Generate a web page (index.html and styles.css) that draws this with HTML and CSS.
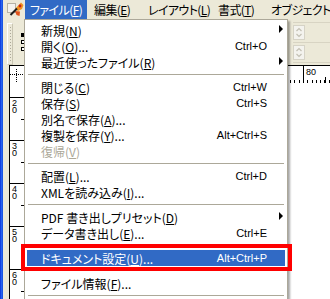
FILE: index.html
```html
<!DOCTYPE html>
<html lang="ja">
<head>
  <meta charset="UTF-8" />
  <title>ファイル メニュー</title>
  <link rel="stylesheet" href="styles.css">
</head>
<body>
  <div class="window">
    <div class="frame-edge"></div>

    <div class="workspace">
      <!-- ===== Menu bar ===== -->
      <div class="menubar">
        <span class="app-icon">
          <svg width="17" height="17" viewBox="0 0 17 17">
            <rect x="0.5" y="2.5" width="8" height="9" fill="#f4f3ee" stroke="#b5b2a5"/>
            <path d="M8 8 L14 1.5 L16.5 4 L15 8 L11 10 Z" fill="#f39321"/>
            <path d="M8 10 L13 10.5 L12.5 15 L9.5 14 Z" fill="#e0531b"/>
            <path d="M3.5 14 L10 7.5" stroke="#1e1e1e" stroke-width="2"/>
            <circle cx="13" cy="5" r="1.4" fill="#c4261a"/>
          </svg>
        </span>
        <span class="menubar-item file active">ファイル(<u>F</u>)</span>
        <span class="menubar-item edit">編集(<u>E</u>)</span>
        <span class="menubar-item layout">レイアウト(<u>L</u>)</span>
        <span class="menubar-item type">書式(<u>T</u>)</span>
        <span class="menubar-item object">オブジェクト(<u>O</u>)</span>
      </div>

      <!-- ===== Control panel ===== -->
      <div class="controlbar">
        <div class="grip"></div>
        <div class="refpoint">
          <i class="on"></i><i></i><i></i>
          <i></i><i></i><i></i>
          <i></i><i></i><i></i>
        </div>
        <div class="fields"></div>
        <div class="spin-col">
          <div class="spin-row">
            <span class="spinner">
              <svg width="10" height="13" viewBox="0 0 10 13"><path d="M2.5 5 L5 2.5 L7.5 5 M2.5 8 L5 10.5 L7.5 8" fill="none" stroke="#c3c0b3" stroke-width="1.2"/></svg>
            </span>
          </div>
          <div class="spin-row">
            <span class="spinner">
              <svg width="10" height="13" viewBox="0 0 10 13"><path d="M2.5 5 L5 2.5 L7.5 5 M2.5 8 L5 10.5 L7.5 8" fill="none" stroke="#c3c0b3" stroke-width="1.2"/></svg>
            </span>
          </div>
        </div>
      </div>

      <!-- ===== Document with rulers ===== -->
      <div class="doc">
        <div class="corner"></div>
        <div class="hruler">
          <span class="hseg">20</span><span class="hseg">30</span><span class="hseg">40</span>
          <span class="hseg">50</span><span class="hseg">60</span><span class="hseg">70</span>
          <span class="hseg">80</span>
        </div>
        <div class="vruler">
          <span class="vseg">20</span><span class="vseg">30</span><span class="vseg">40</span>
          <span class="vseg">50</span><span class="vseg">60</span>
        </div>
        <div class="canvas"></div>
      </div>
    </div>

    <!-- ===== File menu (open) ===== -->
    <ul class="menu">
      <li class="item"><span class="label">新規(<u>N</u>)</span><span class="arrow"></span></li>
      <li class="item"><span class="label">開く(<u>O</u>)...</span><span class="key">Ctrl+O</span></li>
      <li class="item"><span class="label">最近使ったファイル(<u>R</u>)</span><span class="arrow"></span></li>
      <li class="sep"></li>
      <li class="item"><span class="label">閉じる(<u>C</u>)</span><span class="key">Ctrl+W</span></li>
      <li class="item"><span class="label">保存(<u>S</u>)</span><span class="key">Ctrl+S</span></li>
      <li class="item"><span class="label">別名で保存(<u>A</u>)...</span></li>
      <li class="item"><span class="label">複製を保存(<u>Y</u>)...</span><span class="key">Alt+Ctrl+S</span></li>
      <li class="item disabled"><span class="label">復帰(<u>V</u>)</span></li>
      <li class="sep"></li>
      <li class="item"><span class="label">配置(<u>L</u>)...</span><span class="key">Ctrl+D</span></li>
      <li class="item"><span class="label">XMLを読み込み(<u>I</u>)...</span></li>
      <li class="sep"></li>
      <li class="item"><span class="label">PDF 書き出しプリセット(<u>D</u>)</span><span class="arrow"></span></li>
      <li class="item"><span class="label">データ書き出し(<u>E</u>)...</span><span class="key">Ctrl+E</span></li>
      <li class="sep"></li>
      <li class="item selected"><span class="label">ドキュメント設定(<u>U</u>)...</span><span class="key">Alt+Ctrl+P</span></li>
      <li class="sep"></li>
      <li class="item"><span class="label">ファイル情報(<u>F</u>)...</span></li>
      <li class="sep"></li>
    </ul>

    <!-- red annotation box -->
    <div class="callout"></div>
  </div>
</body>
</html>
```

FILE: styles.css
```css
* {
  box-sizing: border-box;
}
body {
  margin: 0;
  width: 330px;
  height: 299px;
  overflow: hidden;
  background: #ece9d8;
  font-family: "Noto Sans CJK JP", sans-serif;
  font-size: 12px;
  color: #000;
}
u {
  text-decoration-thickness: 1px;
  text-underline-offset: 1px;
}
.window {
  position: relative;
  display: flex;
  width: 330px;
  height: 299px;
  overflow: hidden;
}
.frame-edge {
  flex: none;
  width: 3px;
  background: linear-gradient(to right, #0831d9, #2d6cf2 60%, #0c45d6);
}
.workspace {
  flex: 1;
  min-width: 0;
  display: flex;
  flex-direction: column;
}

/* menu bar */
.menubar {
  height: 19px;
  display: flex;
  white-space: nowrap;
  font-feature-settings: "palt";
  letter-spacing: -0.6px;
}
.app-icon {
  flex: none;
  width: 17px;
  margin: 1px 1px 0 4px;
}
.menubar-item {
  flex: none;
  padding: 0 0 0 6px;
  line-height: 19px;
}
.menubar-item.file { width: 62px; padding-left: 5px; }
.menubar-item.edit { width: 54px; padding-left: 7px; }
.menubar-item.layout { width: 70px; padding-left: 7px; }
.menubar-item.type { width: 53px; padding-left: 7px; }
.menubar-item.object { padding-left: 7px; }
.menubar-item.active {
  background: #316ac5;
  color: #fff;
}

/* control panel */
.controlbar {
  height: 49px;
  display: flex;
  align-items: flex-start;
}
.grip {
  flex: none;
  width: 6px;
  height: 42px;
  margin: 4px 0 0 4px;
  border: 1px solid;
  border-color: #fff #c9c5b2 #c9c5b2 #fff;
  background: repeating-linear-gradient(to bottom, #aca899 0 1px, transparent 1px 3px) no-repeat center / 1px 34px;
}
.refpoint {
  flex: none;
  display: grid;
  grid-template-columns: repeat(3, 4px);
  grid-auto-rows: 4px;
  gap: 3px;
  margin: 14px 0 0 8px;
}
.refpoint i {
  border: 1px solid #000;
  background: #fff;
}
.refpoint i.on {
  background: #000;
}
.fields {
  flex: none;
  width: 254px;
}
.spin-col {
  flex: 1;
  margin-top: 3px;
  border-top: 1px solid #d8d4c3;
}
.spin-row {
  height: 20px;
  padding: 2px 0 0 0;
  border-bottom: 1px solid #d8d4c3;
}
.spinner {
  display: flex;
  align-items: center;
  justify-content: center;
  width: 12px;
  height: 15px;
  border: 1px solid #d6d3c6;
  background: #f4f3ee;
}

/* document and rulers */
.doc {
  flex: 1;
  display: grid;
  grid-template-columns: 17px 1fr;
  grid-template-rows: 17px 1fr;
  margin-left: 6px;
  border-left: 1px solid #000;
  border-top: 1px solid #000;
  background: #fff;
  font-family: "Liberation Sans", Arial, sans-serif;
  font-size: 9px;
}
.corner {
  background:
    repeating-linear-gradient(to right, #000 0 1px, transparent 1px 2px) no-repeat 0 8px / 100% 1px,
    repeating-linear-gradient(to bottom, #000 0 1px, transparent 1px 2px) no-repeat 6px 3px / 1px 100%;
}
.hruler {
  display: flex;
  padding-left: 18px;
  white-space: nowrap;
  overflow: hidden;
}
.hseg {
  flex: none;
  width: 43px;
  height: 17px;
  padding: 2px 0 0 2px;
  line-height: 9px;
  border-left: 1px solid #000;
  background:
    linear-gradient(#000, #000) no-repeat 21px 100% / 1px 6px,
    repeating-linear-gradient(to right, transparent 0 3.3px, #000 3.3px 4.3px) no-repeat 0 100% / 100% 3px;
}
.vruler {
  display: flex;
  flex-direction: column;
  padding-top: 14px;
  overflow: hidden;
}
.vseg {
  flex: none;
  width: 17px;
  height: 43px;
  padding: 2px 9px 0 2px;
  line-height: 7px;
  word-break: break-all;
  border-top: 1px solid #000;
  background:
    linear-gradient(#000, #000) no-repeat 100% 21px / 6px 1px,
    repeating-linear-gradient(to bottom, transparent 0 3.3px, #000 3.3px 4.3px) no-repeat 100% 0 / 3px 100%;
}
.canvas {
  background: #fff;
}

/* drop-down menu */
.menu {
  position: absolute;
  left: 24px;
  top: 19px;
  width: 264px;
  margin: 0;
  padding: 2px;
  list-style: none;
  background: #fff;
  border: 1px solid #aca899;
  box-shadow: 2px 2px 2px rgba(0, 0, 0, 0.35);
  font-feature-settings: "palt";
  white-space: nowrap;
}
.item {
  display: flex;
  align-items: center;
  height: 16px;
  padding-left: 14px;
}
.item .label {
  flex: 1;
}
.item .key {
  margin-right: 18px;
  font-family: "Liberation Sans", Arial, sans-serif;
  font-size: 11px;
}
.item .arrow {
  width: 0;
  height: 0;
  margin: 0 2px 2px 0;
  border-left: 4px solid #000;
  border-top: 4px solid transparent;
  border-bottom: 4px solid transparent;
}
.item.disabled {
  color: #aca899;
}
.item.selected {
  background: #316ac5;
  color: #fff;
}
.sep {
  height: 1px;
  margin: 4px 1px;
  background: #aca899;
}

.callout {
  position: absolute;
  left: 21px;
  top: 244px;
  width: 271px;
  height: 27px;
  border: 4px solid #ff0000;
}
```
